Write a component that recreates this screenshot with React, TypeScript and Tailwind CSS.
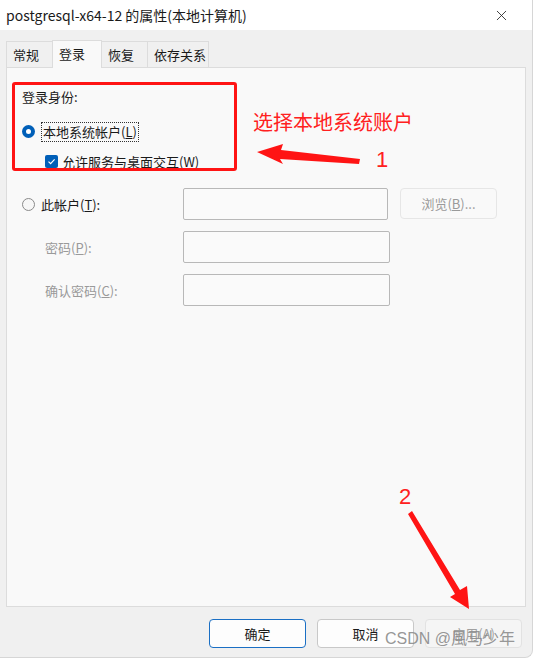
import { X } from "lucide-react";

const font = { fontFamily: '"Microsoft YaHei UI", "Noto Sans CJK SC", "Noto Sans", sans-serif' };

function Radio({ checked }: { checked?: boolean }) {
  return checked ? (
    <span className="flex h-[13px] w-[13px] items-center justify-center rounded-full bg-[#005fb8]">
      <span className="h-[5px] w-[5px] rounded-full bg-white" />
    </span>
  ) : (
    <span className="h-[13px] w-[13px] rounded-full border border-[#8a8a8a] bg-[#f7f7f7]" />
  );
}

function Tab({ label, w, active }: { label: string; w: string; active?: boolean }) {
  return active ? (
    <div className={`relative -mb-px -ml-px z-10 flex h-[28px] ${w} shrink-0 items-start whitespace-nowrap border border-b-0 border-[#dcdcdc] bg-[#f9f9f9] pl-[6px] pt-[3px] text-[13px]`}>
      {label}
    </div>
  ) : (
    <div className={`flex h-[26px] ${w} shrink-0 items-start whitespace-nowrap border border-b-0 border-[#dcdcdc] bg-[#f0f0f0] pl-[6px] pt-[3px] text-[13px] -ml-px first:ml-0`}>
      {label}
    </div>
  );
}

function Field({ w = "w-[206px]" }: { w?: string }) {
  return <div className={`h-[32px] ${w} rounded-[2px] border border-[#b8b8b8] bg-[#fafafa]`} />;
}

function Btn({ label, primary, disabled }: { label: string; primary?: boolean; disabled?: boolean }) {
  return (
    <div
      className={`flex h-[29px] w-[97px] items-center justify-center rounded-[4px] border text-[13px] ${
        primary
          ? "border-[#1a6fc4] bg-[#fdfdfd] text-[#1a1a1a]"
          : disabled
          ? "border-[#e2e2e2] bg-[#f5f5f5] text-[#a0a0a0]"
          : "border-[#c8c8c8] bg-[#fdfdfd] text-[#1a1a1a]"
      }`}
    >
      {label}
    </div>
  );
}

export default function App() {
  return (
    <div className="relative h-[660px] w-[536px] overflow-hidden bg-white text-[#1a1a1a]" style={font}>
      <div className="flex h-[658px] w-[533px] flex-col rounded-br-[8px] border-r border-b border-[#d6d6d6] bg-[#f0f0f0]">
        {/* title bar */}
        <div className="flex h-[30px] items-center justify-between bg-white pl-[6px] pr-[22px]">
          <span className="text-[14px]">postgresql-x64-12 的属性(本地计算机)</span>
          <X size={17} strokeWidth={1.2} className="text-[#222]" />
        </div>

        {/* tabs */}
        <div className="ml-[6px] mt-[10px] flex h-[27px] items-end">
          <Tab label="常规" w="w-[47px]" />
          <Tab label="登录" w="w-[50px]" active />
          <Tab label="恢复" w="w-[47px]" />
          <Tab label="依存关系" w="w-[62px]" />
        </div>

        {/* panel */}
        <div className="mx-[6px] h-[540px] border border-[#dcdcdc] bg-[#f9f9f9] pl-[15px] pt-[19px] text-[13px]">
          <div>登录身份:</div>
          <div className="mt-[15px] flex items-center gap-[6px]">
            <Radio checked />
            <span className="border border-dotted border-[#333] px-px leading-[18px]">
              本地系统帐户(<u>L</u>)
            </span>
          </div>
          <div className="mt-[10px] ml-[23px] flex items-center gap-[4px]">
            <span className="flex h-[13px] w-[13px] items-center justify-center rounded-[2px] bg-[#005fb8]">
              <svg width="9" height="9" viewBox="0 0 9 9">
                <path d="M1.5 4.6 L3.6 6.6 L7.6 2.3" fill="none" stroke="white" strokeWidth="1.2" />
              </svg>
            </span>
            <span>
              允许服务与桌面交互(<u>W</u>)
            </span>
          </div>

          <div className="mt-[17px] flex items-start">
            <div className="flex w-[161px] items-center gap-[6px] pt-[7px]">
              <Radio />
              <span>
                此帐户(<u>T</u>):
              </span>
            </div>
            <Field w="w-[205px]" />
            <div className="ml-[12px] flex h-[31px] w-[97px] items-center justify-center rounded-[4px] border border-[#e6e6e6] bg-[#f9f9f9] text-[#9a9a9a]">
              浏览(<u>B</u>)...
            </div>
          </div>

          <div className="mt-[11px] flex items-start text-[#9a9a9a]">
            <div className="w-[161px] pl-[23px] pt-[7px]">
              密码(<u>P</u>):
            </div>
            <Field w="w-[207px]" />
          </div>

          <div className="mt-[11px] flex items-start text-[#9a9a9a]">
            <div className="w-[161px] pl-[23px] pt-[7px]">
              确认密码(<u>C</u>):
            </div>
            <Field w="w-[207px]" />
          </div>
        </div>

        {/* buttons */}
        <div className="mt-[12px] flex justify-end gap-[11px] pr-[10px]">
          <Btn label="确定" primary />
          <Btn label="取消" />
          <Btn label="应用(A)" disabled />
        </div>
      </div>

      {/* annotations */}
      <div className="absolute left-[12px] top-[82px] h-[89px] w-[225px] rounded-[3px] border-[3px] border-[#ff1414]" />
      <div className="absolute left-[253px] top-[108px] text-[20px] leading-[28px] text-[#ff2020]">选择本地系统账户</div>
      <div className="absolute left-[376px] top-[146px] text-[22px] leading-[28px] text-[#ff2020]" style={{ fontFamily: '"Liberation Sans", sans-serif' }}>
        1
      </div>
      <div className="absolute left-[399px] top-[483px] text-[22px] leading-[28px] text-[#ff2020]" style={{ fontFamily: '"Liberation Sans", sans-serif' }}>
        2
      </div>
      <svg className="absolute left-0 top-0" width="536" height="660" viewBox="0 0 536 660">
        <polygon points="257,152 283,144 281,150 360,159 359,164 280,159 283,164" fill="#ff1414" />
        <polygon points="408,514 412,511 460,590 467,586 469,609 450,597 455,594" fill="#ff1414" />
      </svg>
      <div
        className="absolute left-[385px] top-[628px] text-[16px] leading-[22px] text-[#8a8a8a]/90"
        style={{ fontFamily: '"Liberation Sans", "Noto Sans CJK SC", sans-serif' }}
      >
        CSDN @風马少年
      </div>
    </div>
  );
}
